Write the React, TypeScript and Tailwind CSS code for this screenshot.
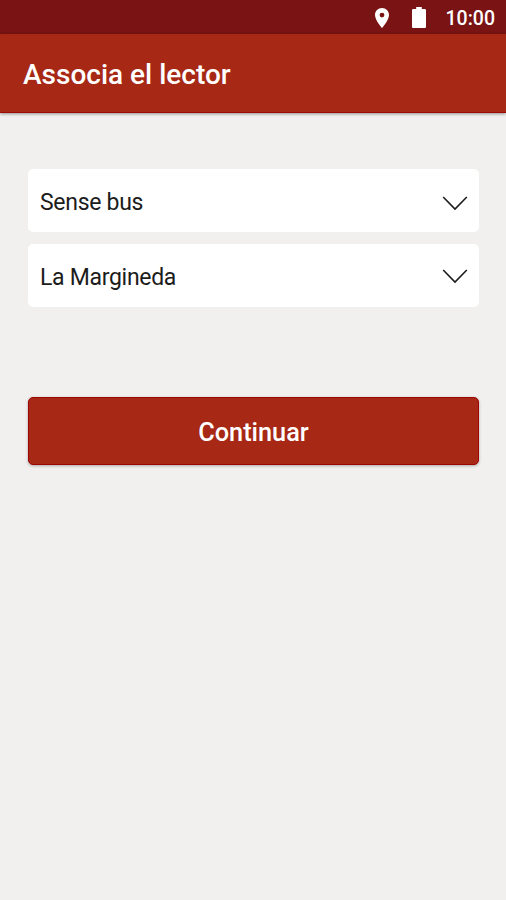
const options = [
  { label: "Sense bus", spacing: "mb-3", text: "pt-1", chevron: "mt-[5px]" },
  { label: "La Margineda", spacing: "", text: "pt-[3px]", chevron: "mt-[2px]" },
];

function PinIcon() {
  return (
    <svg width="14" height="20" viewBox="0 0 14 20" fill="currentColor">
      <path
        fillRule="evenodd"
        d="M7 0C3.1 0 0 3.1 0 7c0 5.2 7 13 7 13s7-7.8 7-13c0-3.9-3.1-7-7-7zm0 4.700a2.400 2.400 0 1 1 0 4.800 2.400 2.400 0 0 1 0-4.800z"
      />
    </svg>
  );
}

function BatteryIcon() {
  return (
    <svg width="14" height="21" viewBox="0 0 14 21" fill="currentColor">
      <path d="M4.200 0h5.600v2.100h2.900c.7 0 1.300.6 1.300 1.300v16.300c0 .7-.6 1.300-1.300 1.300H1.300C.6 21 0 20.400 0 19.700V3.400c0-.7.6-1.300 1.300-1.300h2.900z" />
    </svg>
  );
}

function Chevron({ className }: { className: string }) {
  return (
    <svg
      width="26"
      height="15"
      viewBox="0 0 26 15"
      fill="none"
      stroke="#1c1c1c"
      strokeWidth="1.600"
      className={className}
    >
      <path d="M1.200 1 13 13 24.800 1" />
    </svg>
  );
}

function StatusBar() {
  return (
    <div className="flex h-[34px] items-center justify-end bg-[#791314] pr-[11px] text-white">
      <span className="pt-0.5">
        <PinIcon />
      </span>
      <span className="ml-[23px] pt-px">
        <BatteryIcon />
      </span>
      <span className="ml-5 pt-1 text-[19.500px] leading-none font-medium">
        10:00
      </span>
    </div>
  );
}

export default function App() {
  return (
    <div className="h-[900px] w-[506px] overflow-hidden bg-[#f1f0ee] font-['Roboto',sans-serif]">
      <StatusBar />

      <header className="flex h-[79px] items-center border-b border-[#9c0b09] bg-[#a62815] px-[23px] pt-1 shadow-[0_1px_3px_rgba(0,0,0,0.4)]">
        <h1 className="text-[28px] leading-none font-medium text-white">
          Associa el lector
        </h1>
      </header>

      <main className="px-[28px] pt-[56px]">
        {options.map((option) => (
          <button
            key={option.label}
            className={`flex h-[63px] w-[451px] items-center justify-between rounded-[5px] bg-white pr-[11px] pl-3 text-[23px] leading-none tracking-[-0.300px] text-[#1c1c1c] ${option.spacing}`}
          >
            <span className={option.text}>{option.label}</span>
            <Chevron className={option.chevron} />
          </button>
        ))}

        <button className="mt-[90px] flex h-[68px] w-[451px] items-center justify-center rounded-[5px] border border-[#a00505] bg-[#a62815] pt-1 text-[25.300px] leading-none font-medium text-white shadow-[0_1px_3px_rgba(0,0,0,0.3)]">
          Continuar
        </button>
      </main>
    </div>
  );
}
